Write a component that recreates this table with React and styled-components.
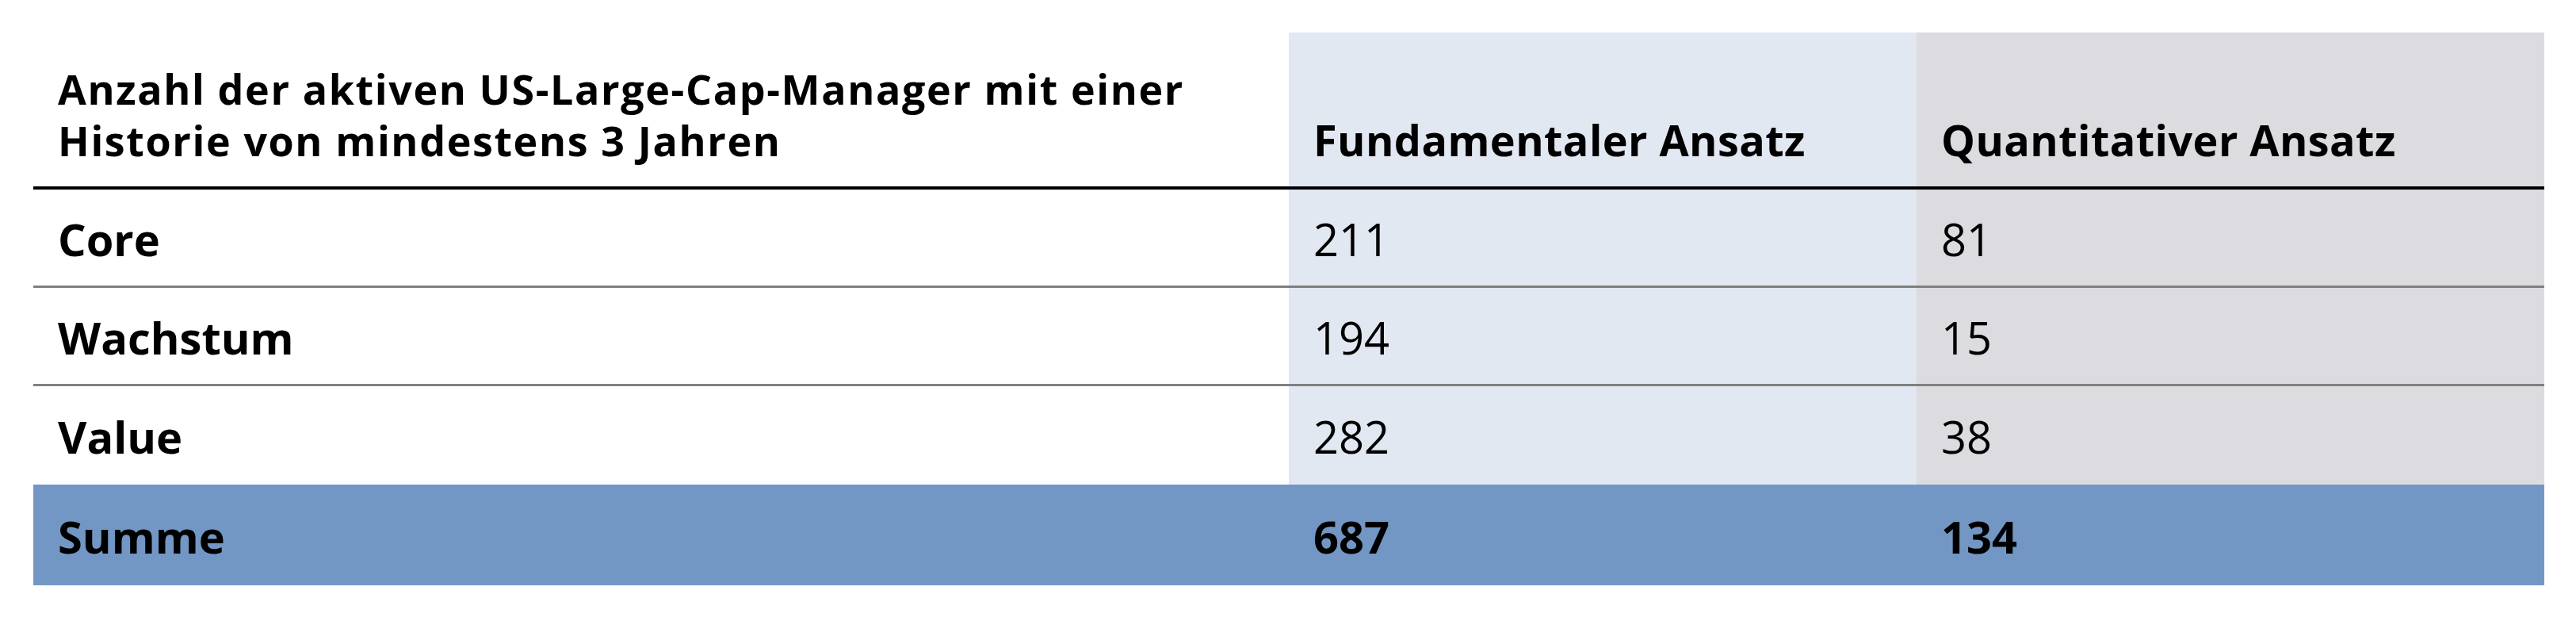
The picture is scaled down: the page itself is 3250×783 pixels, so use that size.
import React from "react";
import styled, { createGlobalStyle } from "styled-components";

const Global = createGlobalStyle`
  html, body { margin: 0; padding: 0; background: #ffffff; }
  *, *::before, *::after { box-sizing: border-box; }
  body { font-family: "Open Sans", "Noto Sans", sans-serif; color: #000; }
`;

const Table = styled.div`
  margin: 41px 40px 0 42px;
  width: 3168px;
  display: flex;
  flex-direction: column;
`;

const Row = styled.div`
  display: grid;
  grid-template-columns: 1584px 792px 792px;
  height: ${(p) => p.$h}px;
  border-bottom: ${(p) => (p.$line ? `${p.$line}px solid ${p.$lineColor}` : "none")};
  background: ${(p) => p.$bg || "transparent"};
`;

const Cell = styled.div`
  display: flex;
  align-items: ${(p) => (p.$bottom ? "flex-end" : "center")};
  padding: ${(p) => (p.$bottom ? "0 20px 26px 31px" : "4px 30px 0 31px")};
  background: ${(p) => p.$bg || "transparent"};
  font-size: ${(p) => p.$size || 56}px;
  line-height: ${(p) => p.$lh || 1.2};
  font-weight: ${(p) => (p.$bold ? 700 : 400)};
  letter-spacing: ${(p) => p.$ls || 0}px;
  white-space: nowrap;
`;

const FUND = "#e2e8f2";
const QUANT = "#dcdbe0";
const SUM = "#7397c4";

const rows = [
  ["Core", "211", "81"],
  ["Wachstum", "194", "15"],
  ["Value", "282", "38"],
];

export default function App() {
  return (
    <>
      <Global />
      <Table>
        <Row $h={198} $line={4} $lineColor="#000">
          <Cell $bottom $bold $size={52} $lh="65px" $ls={1.6}>
            Anzahl der aktiven US-Large-Cap-Manager mit einer
            <br />
            Historie von mindestens 3 Jahren
          </Cell>
          <Cell $bottom $bold $size={54} $lh="65px" $ls={0.4} $bg={FUND}>
            Fundamentaler Ansatz
          </Cell>
          <Cell $bottom $bold $size={54} $lh="65px" $ls={0.4} $bg={QUANT}>
            Quantitativer Ansatz
          </Cell>
        </Row>
        {rows.map((r, i) => (
          <Row key={r[0]} $h={124} $line={i < 2 ? 3 : 0} $lineColor="#808080">
            <Cell $bold>{r[0]}</Cell>
            <Cell $bg={FUND}>{r[1]}</Cell>
            <Cell $bg={QUANT}>{r[2]}</Cell>
          </Row>
        ))}
        <Row $h={127} $bg={SUM}>
          <Cell $bold>Summe</Cell>
          <Cell $bold>687</Cell>
          <Cell $bold>134</Cell>
        </Row>
      </Table>
    </>
  );
}
